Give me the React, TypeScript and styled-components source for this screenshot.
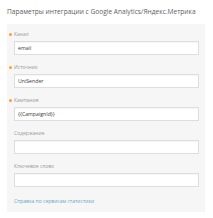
import * as React from 'react'
import styled, { createGlobalStyle } from 'styled-components'

const GlobalStyle = createGlobalStyle`
  html, body {
    margin: 0;
    padding: 0;
    background: #fff;
  }
  body {
    font-family: "Open Sans", "Noto Sans", sans-serif;
  }
`

const Page = styled.div`
  width: 213px;
  height: 218px;
  box-sizing: border-box;
  padding: 7px 8px 6px 7px;
  display: flex;
  flex-direction: column;
`

const Title = styled.div`
  font-size: 6.6px;
  line-height: 10px;
  color: #606060;
  margin-bottom: 7px;
  white-space: nowrap;
`

const Panel = styled.div`
  background: #f6f6f6;
  padding: 6px 6px 7px 7px;
  display: flex;
  flex-direction: column;
`

const Field = styled.div`
  display: flex;
  flex-direction: column;
  margin-bottom: 8px;
`

const Label = styled.div<{ $required?: boolean }>`
  position: relative;
  font-size: 5px;
  line-height: 8px;
  color: #9a9a9a;
  margin-bottom: 3px;
  &::before {
    content: '';
    display: ${p => (p.$required ? 'block' : 'none')};
    position: absolute;
    left: -5px;
    top: 3px;
    width: 3px;
    height: 3px;
    border-radius: 50%;
    background: #f2a533;
  }
`

const Input = styled.div`
  height: 14px;
  box-sizing: border-box;
  background: #fff;
  border: 1px solid #dedede;
  box-shadow: inset 0 1px 1px rgba(0, 0, 0, 0.04);
  padding: 0 3px;
  font-size: 5.2px;
  line-height: 12px;
  color: #3a3a3a;
`

const HelpLink = styled.a`
  font-size: 5px;
  line-height: 8px;
  color: #6aa6c6;
  text-decoration: none;
  margin-top: 2px;
`

const fields = [
  { label: 'Канал', value: 'email', required: true },
  { label: 'Источник', value: 'UniSender', required: true },
  { label: 'Кампания', value: '{{CampaignId}}', required: true },
  { label: 'Содержание', value: '', required: false },
  { label: 'Ключевое слово', value: '', required: false },
]

const App = () => {
  return (
    <>
      <GlobalStyle />
      <Page>
        <Title>Параметры интеграции с Google Analytics/Яндекс.Метрика</Title>
        <Panel>
          {fields.map(f => (
            <Field key={f.label}>
              <Label $required={f.required}>{f.label}</Label>
              <Input>{f.value}</Input>
            </Field>
          ))}
          <HelpLink href="#">Справка по сервисам статистики</HelpLink>
        </Panel>
      </Page>
    </>
  )
}

export default App
